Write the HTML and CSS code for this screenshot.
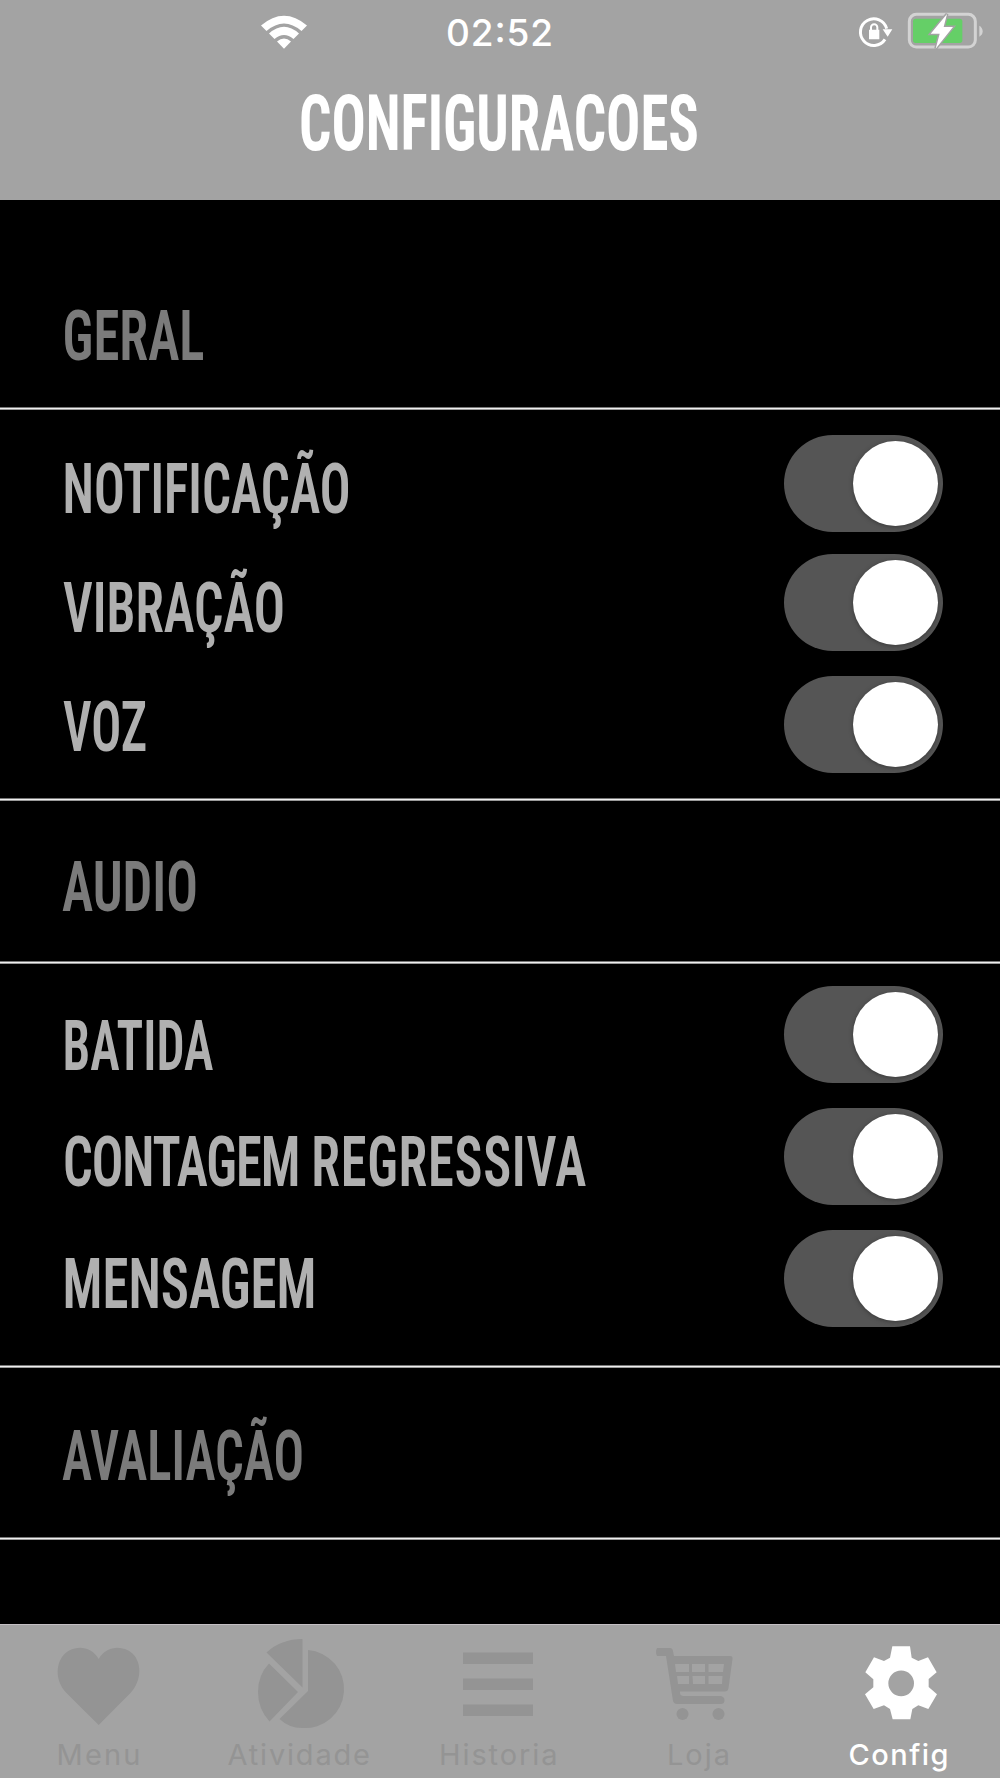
FILE: index.html
```html
<!DOCTYPE html>
<html lang="pt">
<head>
<meta charset="utf-8">
<title>Configurações</title>
<link rel="stylesheet" href="styles.css">
</head>
<body>
<div class="screen">
  <header class="header">
    <div class="status">
      <svg class="wifi" viewBox="0 0 48 36">
        <path d="M1 11.5Q24-8 47 11.5L41.500 17Q24 2 6.500 17Z"/>
        <path d="M9 19.500Q24 6 39 19.500L33.500 25Q24 17 14.500 25Z"/>
        <path d="M17 27.500Q24 21.500 31 27.500L24 34.700Z"/>
      </svg>
      <svg class="clock" viewBox="0 0 110 60"><text x="1" y="45.500" textLength="107">02:52</text></svg>
      <svg class="indicators" viewBox="0 0 390 180">
        <path class="ring" d="M75 118A40 40 0 1 1 80 86"/>
        <path class="white" d="M68 88H97L83 110ZM27 89H58V118H27Z"/>
        <path class="shackle" d="M33 91V82A9.500 9.500 0 0 1 52 82V91"/>
        <rect class="shell" x="148" y="43" width="198" height="98" rx="21"/>
        <rect class="charge" x="159" y="56" width="148" height="73" rx="8"/>
        <path class="nub" d="M358 77Q368 83 368 94T358 110Z"/>
        <path class="bolt" d="M261 42L212 101H239L227 146L279 81H251Z"/>
      </svg>
    </div>
    <svg class="title" viewBox="0 0 1000 140"><text x="299" y="90" textLength="400" lengthAdjust="spacingAndGlyphs">CONFIGURACOES</text></svg>
  </header>

  <main class="settings">
    <section class="heading heading-general">
      <svg class="label" viewBox="0 0 680 97"><text x="62.500" y="78" textLength="142" lengthAdjust="spacingAndGlyphs">GERAL</text></svg>
    </section>
    <section class="group group-general">
      <div class="row">
        <svg class="label" viewBox="0 0 680 97"><text x="62.500" y="78" textLength="288" lengthAdjust="spacingAndGlyphs">NOTIFICAÇÃO</text></svg>
        <span class="switch"><i class="knob"></i></span>
      </div>
      <div class="row">
        <svg class="label" viewBox="0 0 680 97"><text x="63" y="78" textLength="222" lengthAdjust="spacingAndGlyphs">VIBRAÇÃO</text></svg>
        <span class="switch"><i class="knob"></i></span>
      </div>
      <div class="row row-spaced">
        <svg class="label" viewBox="0 0 680 97"><text x="63" y="75" textLength="84" lengthAdjust="spacingAndGlyphs">VOZ</text></svg>
        <span class="switch"><i class="knob"></i></span>
      </div>
    </section>
    <section class="heading heading-audio">
      <svg class="label" viewBox="0 0 680 97"><text x="62" y="78" textLength="136" lengthAdjust="spacingAndGlyphs">AUDIO</text></svg>
    </section>
    <section class="group group-audio">
      <div class="row">
        <svg class="label" viewBox="0 0 680 97"><text x="62.500" y="84" textLength="151" lengthAdjust="spacingAndGlyphs">BATIDA</text></svg>
        <span class="switch"><i class="knob"></i></span>
      </div>
      <div class="row row-spaced">
        <svg class="label" viewBox="0 0 680 97"><text x="63" y="78" textLength="524" lengthAdjust="spacingAndGlyphs"><tspan class="tight">CONTAGEM</tspan> <tspan class="loose">REGRESSIVA</tspan></text></svg>
        <span class="switch"><i class="knob"></i></span>
      </div>
      <div class="row row-spaced">
        <svg class="label" viewBox="0 0 680 97"><text x="62.500" y="78" textLength="254" lengthAdjust="spacingAndGlyphs">MENSAGEM</text></svg>
        <span class="switch"><i class="knob"></i></span>
      </div>
    </section>
    <section class="heading heading-rating">
      <svg class="label" viewBox="0 0 680 97"><text x="62" y="78" textLength="242" lengthAdjust="spacingAndGlyphs">AVALIAÇÃO</text></svg>
    </section>
  </main>

  <nav class="tabs">
    <svg class="tab" viewBox="0 1625 200 153">
      <path d="M98.700 1725L79 1705.500L66.500 1693C54 1680 56 1662 65 1653.500C74 1645 91 1645 98.700 1659C106.500 1645 123.500 1645 132.500 1653.500C141.500 1662 142.500 1680 130.500 1693L118 1705.500Z"/>
      <text x="56.500" y="1765" textLength="84">Menu</text>
    </svg>
    <svg class="tab" viewBox="200 1625 200 153">
      <path d="M302.500 1639V1687.500L266.500 1652.500Q281 1639 302.500 1639ZM269 1663.500L298 1692L269.500 1721.500Q258 1709 258 1692Q258 1675 269 1663.500ZM308 1650A39 39 0 0 1 302 1728Q289 1728 279.500 1719L308 1691Z"/>
      <text x="227.500" y="1765" textLength="142.500">Atividade</text>
    </svg>
    <svg class="tab" viewBox="400 1625 200 153">
      <path d="M463 1652.500H533V1664H463ZM463 1678.500H533V1690H463ZM463 1704.500H533V1716H463Z"/>
      <text x="439" y="1765" textLength="118.500">Historia</text>
    </svg>
    <svg class="tab" viewBox="600 1625 200 153">
      <path fill-rule="evenodd" d="M657 1648H670Q672.500 1648 673 1651L674 1656H730Q733 1656 732.500 1659L728.500 1688Q728 1691.500 725 1691.500H680Q679.500 1695.500 683 1696H721Q724.500 1697 724.500 1700Q724.500 1704 721 1704H677Q674 1704 673 1701L666 1656H657Q655 1652 657 1648ZM675 1664H689V1672H676ZM692 1664H705V1672H692ZM708.500 1664H724L723 1672H708.500ZM677 1676H689V1684H678ZM692.500 1676H705V1684H693ZM708.500 1676H722.500L722 1684H708.500Z"/>
      <circle cx="682.500" cy="1714" r="6"/><circle cx="718.500" cy="1714" r="6"/>
      <text x="667" y="1765" textLength="63">Loja</text>
    </svg>
    <svg class="tab tab-active" viewBox="800 1625 200 153">
      <path fill-rule="evenodd" transform="translate(660 1610) scale(.33333)" d="M697 109H750L755 143L775 153L804 142L830 187L806 207V231L831 253L805 297L775 286L757 297L751 328H698L690 297L672 286L641 297L615 253L640 232V208L616 187L642 142L672 153L690 143ZM762 220A38.500 38.500 0 1 0 685 220A38.500 38.500 0 1 0 762 220Z"/>
      <text x="848.500" y="1765" textLength="100">Config</text>
    </svg>
  </nav>
</div>
</body>
</html>
```
FILE: styles.css
```css
* { box-sizing: border-box; }

body {
  margin: 0;
  background: #000;
}

svg {
  display: block;
  overflow: visible;
}

.screen {
  width: 1000px;
  height: 1778px;
  display: flex;
  flex-direction: column;
  overflow: hidden;
}

.header {
  height: 200px;
  background: #a3a3a3;
}

.status {
  height: 60px;
  display: flex;
  align-items: flex-start;
}

.wifi {
  width: 48px;
  height: 36px;
  margin: 14px 137px 0 260px;
  fill: #fff;
}

.clock {
  width: 110px;
  height: 60px;
  font: 500 37px Inter, sans-serif;
  fill: #fff;
}

.indicators {
  width: 130px;
  height: 60px;
  margin-left: 305px;
}

.ring {
  fill: none;
  stroke: #fff;
  stroke-width: 9;
}

.white { fill: #fff; }

.shackle {
  fill: none;
  stroke: #fff;
  stroke-width: 6;
}

.shell {
  fill: none;
  stroke: #d3d3d3;
  stroke-width: 9;
}

.charge { fill: #65cf67; }

.nub { fill: #d3d3d3; }

.bolt {
  fill: #fff;
  stroke: #a3a3a3;
  stroke-width: 9;
  paint-order: stroke;
}

.title {
  width: 1000px;
  height: 140px;
  font: 700 78px Roboto, sans-serif;
  font-stretch: 75%;
  fill: #fff;
}

.settings {
  flex: 1;
}

/* Hairline with soft edges along the bottom of every block */
.heading,
.group {
  background: linear-gradient(#777 1px, #efefef 1px 2px, #999 2px) bottom / 100% 3px no-repeat;
}

.label {
  width: 680px;
  height: 97px;
  font: 600 71px Roboto, sans-serif;
  font-stretch: 75%;
  fill: #b0b0b0;
}

.tight { letter-spacing: -1.500px; }

.loose { letter-spacing: 0.900px; }

.heading .label { fill: #7b7b7b; }

.heading-general {
  height: 210px;
  padding-top: 82px;
}

.heading-audio {
  height: 163px;
  padding-top: 32px;
}

.heading-rating {
  height: 172px;
  padding-top: 34px;
}

.group { padding-top: 25px; }

.group-general { height: 391px; }

.group-audio {
  height: 404px;
  padding-top: 22px;
}

.row {
  height: 97px;
  display: flex;
  justify-content: space-between;
  padding-right: 57px;
}

.row + .row { margin-top: 22px; }

.row + .row-spaced { margin-top: 25px; }

.switch {
  width: 159px;
  height: 97px;
  padding: 6px 5px 6px 69px;
  border-radius: 48.500px;
  background: #555;
}

.knob {
  display: block;
  width: 85px;
  height: 85px;
  border-radius: 50%;
  background: #fff;
  box-shadow: 0 1px 4px #2228;
}

.tabs {
  height: 154px;
  display: flex;
  border-top: 1px solid #c4c0c4;
  background: #a3a3a3;
}

.tab {
  width: 200px;
  height: 153px;
  font: 400 29px Inter, sans-serif;
  fill: #949494;
}

.tab-active {
  font-weight: 500;
  fill: #fff;
}
```
